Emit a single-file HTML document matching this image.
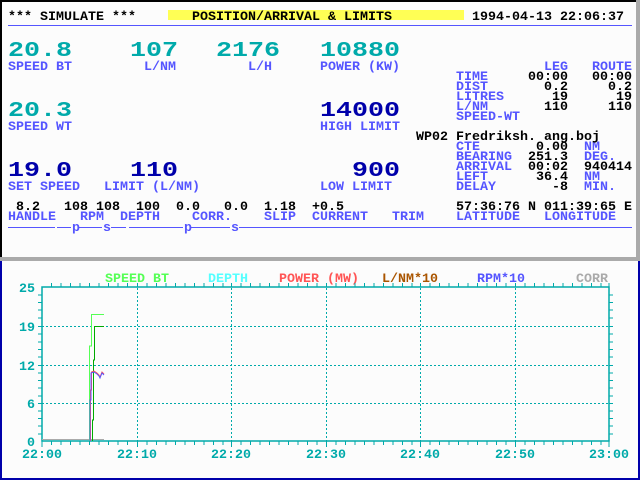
<!DOCTYPE html>
<html><head><meta charset="utf-8"><style>
html,body{margin:0;padding:0;background:#fcfcfc;}
svg{display:block}
text{font-family:"Liberation Mono",monospace;font-weight:bold;font-size:13.33px;}
</style></head><body>
<svg width="640" height="480" viewBox="0 0 640 480" xmlns="http://www.w3.org/2000/svg">
<rect x="0" y="0" width="640" height="480" fill="#fcfcfc"/>
<!-- top panel borders -->
<rect x="0" y="0" width="640" height="2" fill="#000"/>
<rect x="0" y="0" width="2" height="258" fill="#000"/>
<rect x="636" y="0" width="4" height="258" fill="#aaa"/>
<rect x="0" y="257" width="640" height="4" fill="#aaa"/>
<!-- bottom panel border -->
<rect x="0" y="261" width="2" height="219" fill="#0000aa"/>
<rect x="0" y="478" width="640" height="2" fill="#0000aa"/>
<rect x="638" y="261" width="2" height="219" fill="#0000aa"/>

<!-- header -->
<rect x="168" y="10" width="296" height="10" fill="#ffff55"/>
<g fill="#000">
<text x="8" y="20">*** SIMULATE ***</text>
<text x="192" y="20">POSITION/ARRIVAL &amp; LIMITS</text>
<text x="472" y="20">1994-04-13 22:06:37</text>
</g>
<rect x="8" y="25" width="624" height="1" fill="#5555ff"/>

<!-- big numbers -->
<g fill="#00aaaa" style="font-size:26.67px">
<text transform="translate(8,56) scale(1,0.8)" style="font-size:26.67px">20.8</text>
<text transform="translate(130,56) scale(1,0.8)" style="font-size:26.67px">107</text>
<text transform="translate(216,56) scale(1,0.8)" style="font-size:26.67px">2176</text>
<text transform="translate(320,56) scale(1,0.8)" style="font-size:26.67px">10880</text>
<text transform="translate(8,116) scale(1,0.8)" style="font-size:26.67px">20.3</text>
</g>
<g fill="#0000aa">
<text transform="translate(320,116) scale(1,0.8)" style="font-size:26.67px">14000</text>
<text transform="translate(8,176) scale(1,0.8)" style="font-size:26.67px">19.0</text>
<text transform="translate(130,176) scale(1,0.8)" style="font-size:26.67px">110</text>
<text transform="translate(352,176) scale(1,0.8)" style="font-size:26.67px">900</text>
</g>
<g fill="#5555ff">
<text x="8" y="70">SPEED BT</text>
<text x="144" y="70">L/NM</text>
<text x="248" y="70">L/H</text>
<text x="320" y="70">POWER (KW)</text>
<text x="8" y="130">SPEED WT</text>
<text x="320" y="130">HIGH LIMIT</text>
<text x="8" y="190">SET SPEED</text>
<text x="104" y="190">LIMIT (L/NM)</text>
<text x="320" y="190">LOW LIMIT</text>
<text x="544" y="70">LEG</text>
<text x="592" y="70">ROUTE</text>
<text x="456" y="80">TIME</text>
<text x="456" y="90">DIST</text>
<text x="456" y="100">LITRES</text>
<text x="456" y="110">L/NM</text>
<text x="456" y="120">SPEED-WT</text>
<text x="456" y="150">CTE</text>
<text x="456" y="160">BEARING</text>
<text x="456" y="170">ARRIVAL</text>
<text x="456" y="180">LEFT</text>
<text x="456" y="190">DELAY</text>
<text x="584" y="150">NM</text>
<text x="584" y="160">DEG.</text>
<text x="584" y="180">NM</text>
<text x="584" y="190">MIN.</text>
<text x="8" y="220">HANDLE</text>
<text x="80" y="220">RPM</text>
<text x="120" y="220">DEPTH</text>
<text x="192" y="220">CORR.</text>
<text x="264" y="220">SLIP</text>
<text x="312" y="220">CURRENT</text>
<text x="392" y="220">TRIM</text>
<text x="456" y="220">LATITUDE</text>
<text x="544" y="220">LONGITUDE</text>
</g>
<g fill="#000" text-anchor="end">
<text x="568" y="80">00:00</text><text x="632" y="80">00:00</text>
<text x="568" y="90">0.2</text><text x="632" y="90">0.2</text>
<text x="568" y="100">19</text><text x="632" y="100">19</text>
<text x="568" y="110">110</text><text x="632" y="110">110</text>
<text x="568" y="150">0.00</text>
<text x="568" y="160">251.3</text>
<text x="568" y="170">00:02</text><text x="632" y="170">940414</text>
<text x="568" y="180">36.4</text>
<text x="568" y="190">-8</text>
</g>
<g fill="#000">
<text x="416" y="140">WP02 Fredriksh. ang.boj</text>
<text x="16" y="210">8.2</text>
<text x="64" y="210">108 108</text>
<text x="136" y="210">100</text>
<text x="176" y="210">0.0</text>
<text x="224" y="210">0.0</text>
<text x="264" y="210">1.18</text>
<text x="312" y="210">+0.5</text>
<text x="456" y="210">57:36:76 N 011:39:65 E</text>
</g>
<!-- separator line with p/s -->
<g stroke="#5555ff" stroke-width="1">
<line x1="8" y1="227.5" x2="55" y2="227.5"/>
<line x1="57" y1="227.5" x2="71" y2="227.5"/>
<line x1="79" y1="227.5" x2="102" y2="227.5"/>
<line x1="111" y1="227.5" x2="126" y2="227.5"/>
<line x1="129" y1="227.5" x2="183" y2="227.5"/>
<line x1="191" y1="227.5" x2="230" y2="227.5"/>
<line x1="239" y1="227.5" x2="632" y2="227.5"/>
</g>
<g fill="#5555ff">
<text x="72" y="231">p</text><text x="103" y="231">s</text>
<text x="184" y="231">p</text><text x="231" y="231">s</text>
</g>

<!-- chart legend -->
<text x="105" y="282" fill="#55ff55">SPEED BT</text>
<text x="208" y="282" fill="#55ffff">DEPTH</text>
<text x="279" y="282" fill="#ff5555">POWER (MW)</text>
<text x="382" y="282" fill="#aa5500">L/NM*10</text>
<text x="477" y="282" fill="#5555ff">RPM*10</text>
<text x="576" y="282" fill="#aaaaaa">CORR</text>

<!-- grid -->
<g stroke="#00aaaa" stroke-width="1" stroke-dasharray="2,2">
<line x1="42" y1="326.5" x2="609" y2="326.5"/>
<line x1="42" y1="365.5" x2="609" y2="365.5"/>
<line x1="42" y1="403.5" x2="609" y2="403.5"/>
<line x1="137.5" y1="288" x2="137.5" y2="441"/>
<line x1="231.5" y1="288" x2="231.5" y2="441"/>
<line x1="326.5" y1="288" x2="326.5" y2="441"/>
<line x1="420.5" y1="288" x2="420.5" y2="441"/>
<line x1="515.5" y1="288" x2="515.5" y2="441"/>
</g>
<rect x="42" y="287" width="567" height="154" fill="none" stroke="#00aaaa" stroke-width="1.5"/>
<g id="ticks" stroke="#00aaaa" stroke-width="1">
<path d="M51.5 283v4M61 283v4M70.5 283v4M80 283v4M89.5 283v4M99 283v4M108.5 283v4M118 283v4M127.5 283v4M137.5 283v4M147 283v4M156.5 283v4M166 283v4M175.5 283v4M185 283v4M194.5 283v4M204 283v4M213.5 283v4M223 283v4M231.5 283v4M241 283v4M250.5 283v4M260 283v4M269.5 283v4M279 283v4M288.5 283v4M298 283v4M307.5 283v4M317 283v4M326.5 283v4M336 283v4M345.5 283v4M355 283v4M364.5 283v4M374 283v4M383.5 283v4M393 283v4M402.5 283v4M412 283v4M420.5 283v4M430 283v4M439.5 283v4M449 283v4M458.5 283v4M468 283v4M477.5 283v4M487 283v4M496.5 283v4M506 283v4M515.5 283v4M525 283v4M534.5 283v4M544 283v4M553.5 283v4M563 283v4M572.5 283v4M582 283v4M591.5 283v4M601 283v4M609 283v4"/>
<path d="M51.5 441v4M61 441v4M70.5 441v4M80 441v4M89.5 441v4M99 441v4M108.5 441v4M118 441v4M127.5 441v4M137.5 441v6M147 441v4M156.5 441v4M166 441v4M175.5 441v4M185 441v4M194.5 441v4M204 441v4M213.5 441v4M223 441v4M231.5 441v6M241 441v4M250.5 441v4M260 441v4M269.5 441v4M279 441v4M288.5 441v4M298 441v4M307.5 441v4M317 441v4M326.5 441v6M336 441v4M345.5 441v4M355 441v4M364.5 441v4M374 441v4M383.5 441v4M393 441v4M402.5 441v4M412 441v4M420.5 441v6M430 441v4M439.5 441v4M449 441v4M458.5 441v4M468 441v4M477.5 441v4M487 441v4M496.5 441v4M506 441v4M515.5 441v6M525 441v4M534.5 441v4M544 441v4M553.5 441v4M563 441v4M572.5 441v4M582 441v4M591.5 441v4M601 441v4M609 441v6M42 441v6"/>
<path d="M38 295h4M38 302.5h4M38 310h4M38 318h4M38 326.5h4M38 334h4M38 342h4M38 349.5h4M38 357h4M38 365.5h4M38 373h4M38 380.5h4M38 388h4M38 396h4M38 403.5h4M38 411h4M38 418.5h4M38 426h4M38 434h4"/>
<path d="M609 295h4M609 302.5h4M609 310h4M609 318h4M609 326.5h4M609 334h4M609 342h4M609 349.5h4M609 357h4M609 365.5h4M609 373h4M609 380.5h4M609 388h4M609 396h4M609 403.5h4M609 411h4M609 418.5h4M609 426h4M609 434h4"/>
</g>
<g fill="#00aaaa" text-anchor="end">
<text x="35" y="292">25</text>
<text x="35" y="331">19</text>
<text x="35" y="370">12</text>
<text x="35" y="408">6</text>
<text x="35" y="446">0</text>
</g>
<g fill="#00aaaa" text-anchor="middle">
<text x="42" y="458">22:00</text>
<text x="137" y="458">22:10</text>
<text x="231" y="458">22:20</text>
<text x="326" y="458">22:30</text>
<text x="420" y="458">22:40</text>
<text x="515" y="458">22:50</text>
<text x="609" y="458">23:00</text>
</g>
<!-- data -->
<g fill="none" stroke-width="1">
<path d="M42 439.5H104" stroke="#aaaaaa"/>
<path d="M89.5 441V346H91.5V314.5H104" stroke="#55ff55"/>
<path d="M92.5 441V420H93.5V360H94.5V326.5H104" stroke="#00aa00"/>
<path d="M90.5 441V390H91.5V372L94 371L97 373L99 375L100 377L102 372L104 374" stroke="#ff5555"/>
<path d="M90 441V400H91V373L94 372L97 374L99 376L100 378L102 373L104 375" stroke="#5555ff"/>
</g>
</svg>
</body></html>
